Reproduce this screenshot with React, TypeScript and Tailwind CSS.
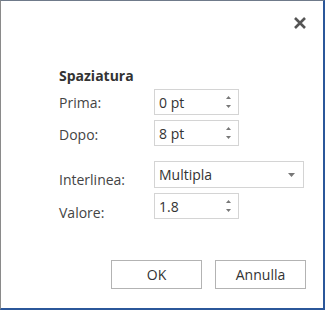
function Spinner({ value }: { value: string }) {
  return (
    <div className="flex h-[26px] w-[85px] items-center justify-between border border-[#d4d4d4] bg-white pl-[4px] pr-[7px]">
      <span className="text-[14px] text-[#333]">{value}</span>
      <div className="flex flex-col items-center gap-[6px]">
        <svg width="5" height="3" viewBox="0 0 5 3">
          <path d="M2.5 0L5 3H0z" fill="#777" />
        </svg>
        <svg width="5" height="3" viewBox="0 0 5 3">
          <path d="M0 0h5L2.5 3z" fill="#777" />
        </svg>
      </div>
    </div>
  )
}

export default function App() {
  return (
    <div
      className="h-[310px] w-[325px] border-t border-l border-r-2 border-b-2 border-t-[#6f7a8a] border-l-[#8a8a8a] border-r-[#2b579a] border-b-[#2b579a] bg-white text-[#444]"
      style={{ fontFamily: '"Segoe UI", "Open Sans", "Noto Sans", sans-serif' }}
    >
      <div className="flex justify-end pr-[16px] pt-[15px]">
        <svg width="14" height="14" viewBox="0 0 14 14">
          <path d="M2 2L12 12M12 2L2 12" stroke="#555" strokeWidth="2.6" />
        </svg>
      </div>

      <div className="pl-[58px] pt-[37px]">
        <div className="text-[14px] font-bold leading-[18px] text-[#333]">Spaziatura</div>

        <div className="mt-[4px] flex flex-col gap-[5px]">
          <div className="flex items-center">
            <span className="w-[95px] text-[14px]">Prima:</span>
            <Spinner value="0 pt" />
          </div>
          <div className="flex items-center">
            <span className="mt-[3px] w-[95px] text-[14px]">Dopo:</span>
            <Spinner value="8 pt" />
          </div>
        </div>

        <div className="mt-[15px] flex flex-col gap-[5px]">
          <div className="flex items-end">
            <span className="-mb-[1px] w-[95px] text-[14px] leading-[18px]">Interlinea:</span>
            <div className="flex h-[27px] w-[150px] items-center justify-between border border-[#d4d4d4] pl-[4px] pr-[8px]">
              <span className="text-[14px] text-[#333]">Multipla</span>
              <svg width="7" height="4" viewBox="0 0 7 4">
                <path d="M0 0h7L3.5 4z" fill="#777" />
              </svg>
            </div>
          </div>
          <div className="flex items-end">
            <span className="-mb-[3px] w-[95px] text-[14px] leading-[18px]">Valore:</span>
            <Spinner value="1.8" />
          </div>
        </div>
      </div>

      <div className="mt-[41px] flex justify-end gap-[13px] pr-[17px]">
        <button className="h-[29px] w-[91px] border border-[#b3b3b3] bg-white text-[14px] text-[#333]">
          OK
        </button>
        <button className="h-[29px] w-[91px] border border-[#b3b3b3] bg-white text-[14px] text-[#333]">
          Annulla
        </button>
      </div>
    </div>
  )
}
